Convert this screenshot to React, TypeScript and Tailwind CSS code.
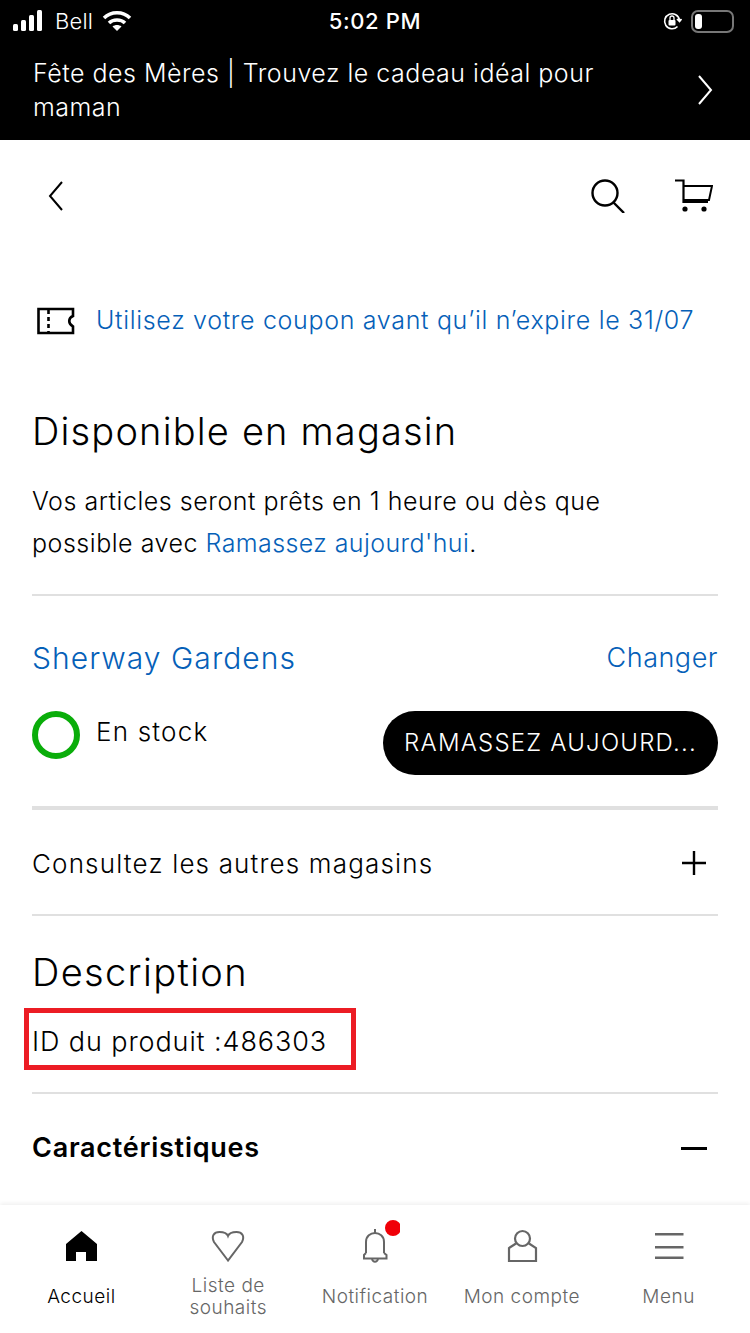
import React from 'react';

const font = { fontFamily: 'Inter, "Liberation Sans", sans-serif' };

const Divider = ({ className = '' }: { className?: string }) => (
  <div className={`bg-[#e0e0e0] ${className}`} />
);

const NavItem = ({ label, icon, active }: { label: React.ReactNode; icon: React.ReactNode; active?: boolean }) => (
  <div className={`flex-1 flex flex-col items-center ${active ? 'text-black' : 'text-[#666666]'}`}>
    <div className="h-[50px] w-[50px] mt-[15px] relative">{icon}</div>
    <div className="h-[62px] flex items-center justify-center text-center text-[19px] leading-[22px] tracking-[0.5px] pb-[8px] whitespace-nowrap">{label}</div>
  </div>
);

const App: React.FC = () => {
  return (
    <div className="w-[750px] h-[1333px] bg-white flex flex-col overflow-hidden" style={font}>
      <div className="bg-black text-white h-[140px] shrink-0">
        <div className="h-[42px] px-[13px] flex items-center relative text-[22px] font-light">
          <svg width="33" height="22" viewBox="0 0 33 22" fill="white">
            <rect x="0" y="14" width="5" height="7" rx="1.5" />
            <rect x="8" y="10" width="5" height="11" rx="1.5" />
            <rect x="16" y="5" width="5" height="16" rx="1.5" />
            <rect x="24" y="0" width="5" height="21" rx="1.5" />
          </svg>
          <span className="ml-[9px] tracking-[0.2px]">Bell</span>
          <svg className="ml-[9px]" width="30" height="22" viewBox="0 0 30 22" fill="none" stroke="white" strokeWidth="3.5">
            <path d="M2 8 C9 1 21 1 28 8" />
            <path d="M7 13 C11 9 19 9 23 13" />
            <path d="M15 21 L10.5 16.5 C13 14.5 17 14.5 19.5 16.5 Z" fill="white" stroke="none" />
          </svg>
          <span className="absolute left-0 right-0 text-center font-medium text-[22px] tracking-[0.6px]">5:02 PM</span>
          <div className="ml-auto flex items-center gap-[9px]">
            <svg width="20" height="20" viewBox="0 0 20 20" fill="none" stroke="white" strokeWidth="1.6">
              <path d="M15.5 15.5 A7.5 7.5 0 1 1 17.5 9" />
              <path d="M15 8 L17.5 10.5 L19.5 8" fill="white" />
              <rect x="6.5" y="9" width="7" height="5.5" rx="1" fill="white" stroke="none" />
              <path d="M8 9 V7 a2 2 0 0 1 4 0 V9" strokeWidth="1.3" />
            </svg>
            <div className="w-[43px] h-[23px] rounded-[7px] border-2 border-[#777777] p-[2px] mr-[3px]">
              <div className="w-[7px] h-full bg-white rounded-[3px]" />
            </div>
          </div>
        </div>
        <div className="h-[98px] pl-[33px] pr-[32px] flex items-start justify-between">
          <p className="w-[600px] text-[25px] leading-[34px] tracking-[0.5px] font-light pt-[14px]">
            Fête des Mères | Trouvez le cadeau idéal pour maman
          </p>
          <svg className="mt-[32px] mr-[4px]" width="18" height="32" viewBox="0 0 18 32" fill="none" stroke="white" strokeWidth="2">
            <path d="M3 2 L15 16 L3 30" />
          </svg>
        </div>
      </div>

      <main className="flex-1 min-h-0 overflow-hidden px-[32px] text-black">
        <div className="h-[112px] flex items-center justify-between">
          <svg className="ml-[14px]" width="20" height="32" viewBox="0 0 20 32" fill="none" stroke="black" strokeWidth="2">
            <path d="M16 2 L4 16 L16 30" />
          </svg>
          <div className="flex items-center gap-[50px] mr-[5px]">
            <svg width="34" height="34" viewBox="0 0 34 34" fill="none" stroke="black" strokeWidth="2.4">
              <circle cx="14" cy="14" r="12.5" />
              <path d="M22 23 L33 34" />
            </svg>
            <svg width="38" height="34" viewBox="0 0 38 34" fill="none" stroke="black" strokeWidth="2.2">
              <path d="M0 1.5 H8.5 V23 H33" />
              <path d="M8.5 7 H37 L34 21 H8.5" strokeWidth="2" />
              <circle cx="10" cy="30" r="2.6" fill="black" stroke="none" />
              <circle cx="29" cy="30" r="2.6" fill="black" stroke="none" />
            </svg>
          </div>
        </div>

        <div className="h-[68px] mt-[35px] flex items-center">
          <svg className="ml-[5px] shrink-0" width="38" height="28" viewBox="0 0 38 28" fill="none" stroke="black" strokeWidth="2.6">
            <path d="M1.5 2 H36 V9 C31 11 31 17 36 19.5 V26 H1.5 Z" />
            <path d="M11.5 3 V26" strokeDasharray="4 3" />
          </svg>
          <span className="ml-[21px] text-[25px] tracking-[0.68px] font-light text-[#0560b8] whitespace-nowrap">
            Utilisez votre coupon avant qu’il n’expire le 31/07
          </span>
        </div>

        <h2 className="mt-[53px] text-[38px] leading-[46px] tracking-[1.18px] font-light">Disponible en magasin</h2>
        <p className="mt-[26px] text-[25px] leading-[42px] tracking-[0.53px] font-light">
          Vos articles seront prêts en 1 heure ou dès que
          <br />
          possible avec <span className="text-[#0560b8] tracking-[0.4px]">Ramassez aujourd'hui</span>.
        </p>
        <Divider className="h-[2px] mt-[30px]" />

        <div className="h-[96px] pt-[42px] flex items-start justify-between text-[#0560b8] font-light">
          <span className="text-[30px] leading-[40px] tracking-[1.05px]">Sherway Gardens</span>
          <span className="text-[27px] leading-[40px] tracking-[0.5px]">Changer</span>
        </div>
        <div className="flex items-start justify-between h-[112px] mt-[2px]">
          <div className="flex items-center">
            <div className="w-[48px] h-[48px] rounded-full border-[6px] border-[#0aad0a] mt-[17px]" />
            <span className="ml-[16px] text-[26px] tracking-[1.2px] font-light mt-[9px]">En stock</span>
          </div>
          <div className="w-[335px] h-[64px] mt-[17px] rounded-full bg-black text-white flex items-center justify-center text-[24px] tracking-[1.2px] font-light whitespace-nowrap">
            RAMASSEZ AUJOURD...
          </div>
        </div>
        <Divider className="h-[4px]" />

        <div className="h-[104px] pt-[2px] flex items-center justify-between">
          <span className="text-[26px] tracking-[1.16px] font-light">Consultez les autres magasins</span>
          <svg className="mr-[11px]" width="26" height="26" viewBox="0 0 26 26" stroke="black" strokeWidth="2.4">
            <path d="M13 1 V25 M1 13 H25" />
          </svg>
        </div>
        <Divider className="h-[2px]" />

        <h2 className="mt-[33px] text-[38px] leading-[46px] tracking-[1.35px] font-light">Description</h2>
        <div className="relative mt-[22px] h-[46px] pt-[4px] flex items-center">
          <span className="text-[27px] tracking-[0.9px] font-light">ID du produit :486303</span>
          <div className="absolute left-[-8px] top-[-9px] w-[332px] h-[62px] border-[5px] border-[#ec1c24]" />
        </div>
        <Divider className="h-[2px] mt-[29px]" />

        <div className="h-[108px] flex items-center justify-between">
          <span className="text-[27px] font-semibold tracking-[0.74px]">Caractéristiques</span>
          <div className="w-[26px] h-[3px] bg-black mr-[11px]" />
        </div>
      </main>

      <nav className="h-[128px] shrink-0 bg-white flex px-[8px] shadow-[0_-2px_4px_rgba(0,0,0,0.06)] relative font-light">
        <NavItem
          active
          label="Accueil"
          icon={
            <svg width="50" height="50" viewBox="0 0 50 50" fill="black">
              <path d="M25.5 11 L41 24 V41 H30 V32 H20 V41 H10 V24 Z" />
            </svg>
          }
        />
        <NavItem
          label={<>Liste de<br />souhaits</>}
          icon={
            <svg width="50" height="50" viewBox="0 0 50 50" fill="none" stroke="#666666" strokeWidth="2">
              <path d="M25 40.5 L11 22 C8 16 11 12 16.5 12 C20 12 24 13.5 25 16 C26 13.5 30 12 33.5 12 C39 12 42 16 39 22 Z" />
            </svg>
          }
        />
        <NavItem
          label="Notification"
          icon={
            <svg width="50" height="50" viewBox="0 0 50 50" fill="none" stroke="#666666" strokeWidth="2">
              <path d="M25 9 V13" />
              <path d="M16 33 V22 C16 10 34 10 34 22 V33" />
              <path d="M16 33 L14 35 V38.5 H36.5 V35 L34 33" />
              <path d="M22 39 C23 42.5 27 42.5 28 39" />
              <circle cx="43" cy="8" r="8" fill="#f00008" stroke="none" />
            </svg>
          }
        />
        <NavItem
          label="Mon compte"
          icon={
            <svg width="50" height="50" viewBox="0 0 50 50" fill="none" stroke="#666666" strokeWidth="2.2">
              <circle cx="25.5" cy="18.5" r="7.5" />
              <path d="M19 23.5 L12 28 V41 H39 V28 L32 23.5" />
            </svg>
          }
        />
        <NavItem
          label="Menu"
          icon={
            <svg width="50" height="50" viewBox="0 0 50 50" fill="#666666">
              <rect x="11" y="13" width="28.5" height="2.5" />
              <rect x="11" y="26" width="28.5" height="2.5" />
              <rect x="11" y="36.5" width="28.5" height="2.5" />
            </svg>
          }
        />
      </nav>
    </div>
  );
};

export default App;
